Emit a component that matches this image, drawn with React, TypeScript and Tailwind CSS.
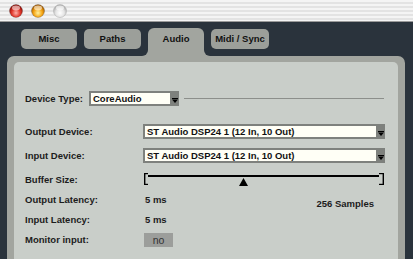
import React from "react";

const font = { fontFamily: '"Liberation Sans", Arial, sans-serif' };

function Light({ kind }: { kind: "red" | "yellow" | "grey" }) {
  const stops =
    kind === "red"
      ? ["#ffb0a8", "#e0382c", "#8c0f08"]
      : kind === "yellow"
      ? ["#fff3a0", "#f5a515", "#a45a00"]
      : ["#ffffff", "#e4e4e4", "#a8a8a8"];
  const id = `g-${kind}`;
  return (
    <svg width="14" height="14" viewBox="0 0 14 14">
      <defs>
        <radialGradient id={id} cx="50%" cy="65%" r="60%">
          <stop offset="0%" stopColor={stops[0]} />
          <stop offset="55%" stopColor={stops[1]} />
          <stop offset="100%" stopColor={stops[2]} />
        </radialGradient>
      </defs>
      <circle cx="7" cy="7" r="6.5" fill={`url(#${id})`} stroke={kind === "grey" ? "#b4b4b4" : "#00000055"} strokeWidth="0.6" />
      <ellipse cx="7" cy="4" rx="4" ry="2.4" fill="#ffffff" opacity={kind === "grey" ? 0.6 : 0.55} />
    </svg>
  );
}

function Dropdown({ text, width }: { text: string; width: string }) {
  return (
    <div className={`${width} h-[15px] bg-[#7e817d] p-[2px] pr-0 flex`}>
      <div className="flex-1 bg-[#fffff6] flex items-center pl-[2px] text-[9.5px] font-bold text-[#111] leading-none whitespace-nowrap overflow-hidden">
        {text}
      </div>
      <div className="w-[9px] flex items-end justify-center pb-[1px]">
        <svg width="6" height="5" viewBox="0 0 6 5">
          <rect x="0" y="0" width="6" height="1" fill="#000" />
          <polygon points="0,1.5 6,1.5 3,5" fill="#000" />
        </svg>
      </div>
    </div>
  );
}

function Tab({ label, w, active }: { label: string; w: string; active?: boolean }) {
  if (active) {
    return (
      <div className={`relative ${w} h-[28px] mt-[-1px] bg-[#a2a59f] rounded-t-[6px] flex justify-center pt-[6px] text-[9.5px] font-bold text-[#111] leading-none`}>
        {label}
        <div className="absolute bottom-0 left-[-6px] w-[6px] h-[6px] bg-[#a2a59f]">
          <div className="w-full h-full bg-[#2a333c] rounded-br-[6px]" />
        </div>
        <div className="absolute bottom-0 right-[-6px] w-[6px] h-[6px] bg-[#a2a59f]">
          <div className="w-full h-full bg-[#2a333c] rounded-bl-[6px]" />
        </div>
      </div>
    );
  }
  return (
    <div className={`${w} h-[20px] bg-[#9c9f9a] rounded-[5px] flex items-center justify-center text-[9.5px] font-bold text-[#111] leading-none`}>
      {label}
    </div>
  );
}

function Label({ children }: { children: React.ReactNode }) {
  return <div className="w-[118px] shrink-0 text-[9.5px] font-bold text-[#1c1c1c] leading-none">{children}</div>;
}

export default function App() {
  return (
    <div style={font} className="w-[413px] h-[259px] overflow-hidden flex flex-col bg-[#2a333c]">
      {/* title bar */}
      <div className="h-[22px] shrink-0 flex items-center pl-[9px] gap-[8px] bg-[repeating-linear-gradient(180deg,#f4f4f4_0px,#f4f4f4_2px,#e3e3e3_2px,#e3e3e3_4px)] border-b border-[#9a9a9a]">
        <Light kind="red" />
        <Light kind="yellow" />
        <Light kind="grey" />
      </div>

      {/* tabs */}
      <div className="flex items-start gap-[7px] pl-[21px] pt-[7px] h-[34px] shrink-0">
        <Tab label="Misc" w="w-[56px]" />
        <Tab label="Paths" w="w-[57px]" />
        <Tab label="Audio" w="w-[56px]" active />
        <Tab label="Midi / Sync" w="w-[58px]" />
      </div>

      {/* panel */}
      <div className="mx-[7px] mr-[8px] flex-1 bg-[#a2a59f] rounded-t-[7px] pt-[6px] px-[7px]">
        <div className="h-full bg-[#c9cec9] rounded-t-[5px] pl-[11px] pr-[13px] pt-[29px] flex flex-col">
          {/* Device type */}
          <div className="h-[15px] flex items-center">
            <div className="w-[64px] shrink-0 text-[9.5px] font-bold text-[#1c1c1c] leading-none">Device Type:</div>
            <Dropdown text="CoreAudio" width="w-[90px]" />
            <div className="ml-[5px] flex-1 h-px bg-[#8c8f8b] mr-px" />
          </div>

          {/* Output device */}
          <div className="h-[15px] mt-[18px] flex items-center">
            <Label>Output Device:</Label>
            <Dropdown text="ST Audio DSP24 1 (12 In, 10 Out)" width="flex-1" />
          </div>

          {/* Input device */}
          <div className="h-[15px] mt-[9px] flex items-center">
            <Label>Input Device:</Label>
            <Dropdown text="ST Audio DSP24 1 (12 In, 10 Out)" width="flex-1" />
          </div>

          {/* Buffer size */}
          <div className="h-[13px] mt-[10px] flex items-center">
            <Label>Buffer Size:</Label>
            <svg width="241" height="13" viewBox="0 0 241 13" className="ml-px">
              <rect x="0" y="0" width="1.4" height="12" fill="#000" />
              <rect x="0" y="0" width="4" height="1.2" fill="#000" />
              <rect x="0" y="10.8" width="4" height="1.2" fill="#000" />
              <rect x="4" y="2" width="231" height="2" fill="#000" />
              <rect x="238.6" y="0" width="1.4" height="12" fill="#000" />
              <rect x="235" y="0" width="5" height="1.2" fill="#000" />
              <rect x="235" y="10.8" width="5" height="1.2" fill="#000" />
              <polygon points="99.5,5 104,13 95,13" fill="#000" />
            </svg>
          </div>

          {/* Output latency */}
          <div className="h-[14px] mt-[7px] flex items-center">
            <Label>Output Latency:</Label>
            <div className="ml-[2px] text-[9.5px] font-bold text-[#1c1c1c] leading-none">5 ms</div>
            <div className="ml-auto mr-[11px] mt-[8px] text-[9.5px] font-bold text-[#1c1c1c] leading-none">256 Samples</div>
          </div>

          {/* Input latency */}
          <div className="h-[14px] mt-[6px] flex items-center">
            <Label>Input Latency:</Label>
            <div className="ml-[2px] text-[9.5px] font-bold text-[#1c1c1c] leading-none">5 ms</div>
          </div>

          {/* Monitor input */}
          <div className="h-[14px] mt-[6px] flex items-center">
            <Label>Monitor input:</Label>
            <div className="ml-px w-[29px] h-[14px] bg-[#9c9e9b] flex items-center justify-center text-[10.5px] text-[#333] leading-none">
              no
            </div>
          </div>
        </div>
      </div>
    </div>
  );
}
